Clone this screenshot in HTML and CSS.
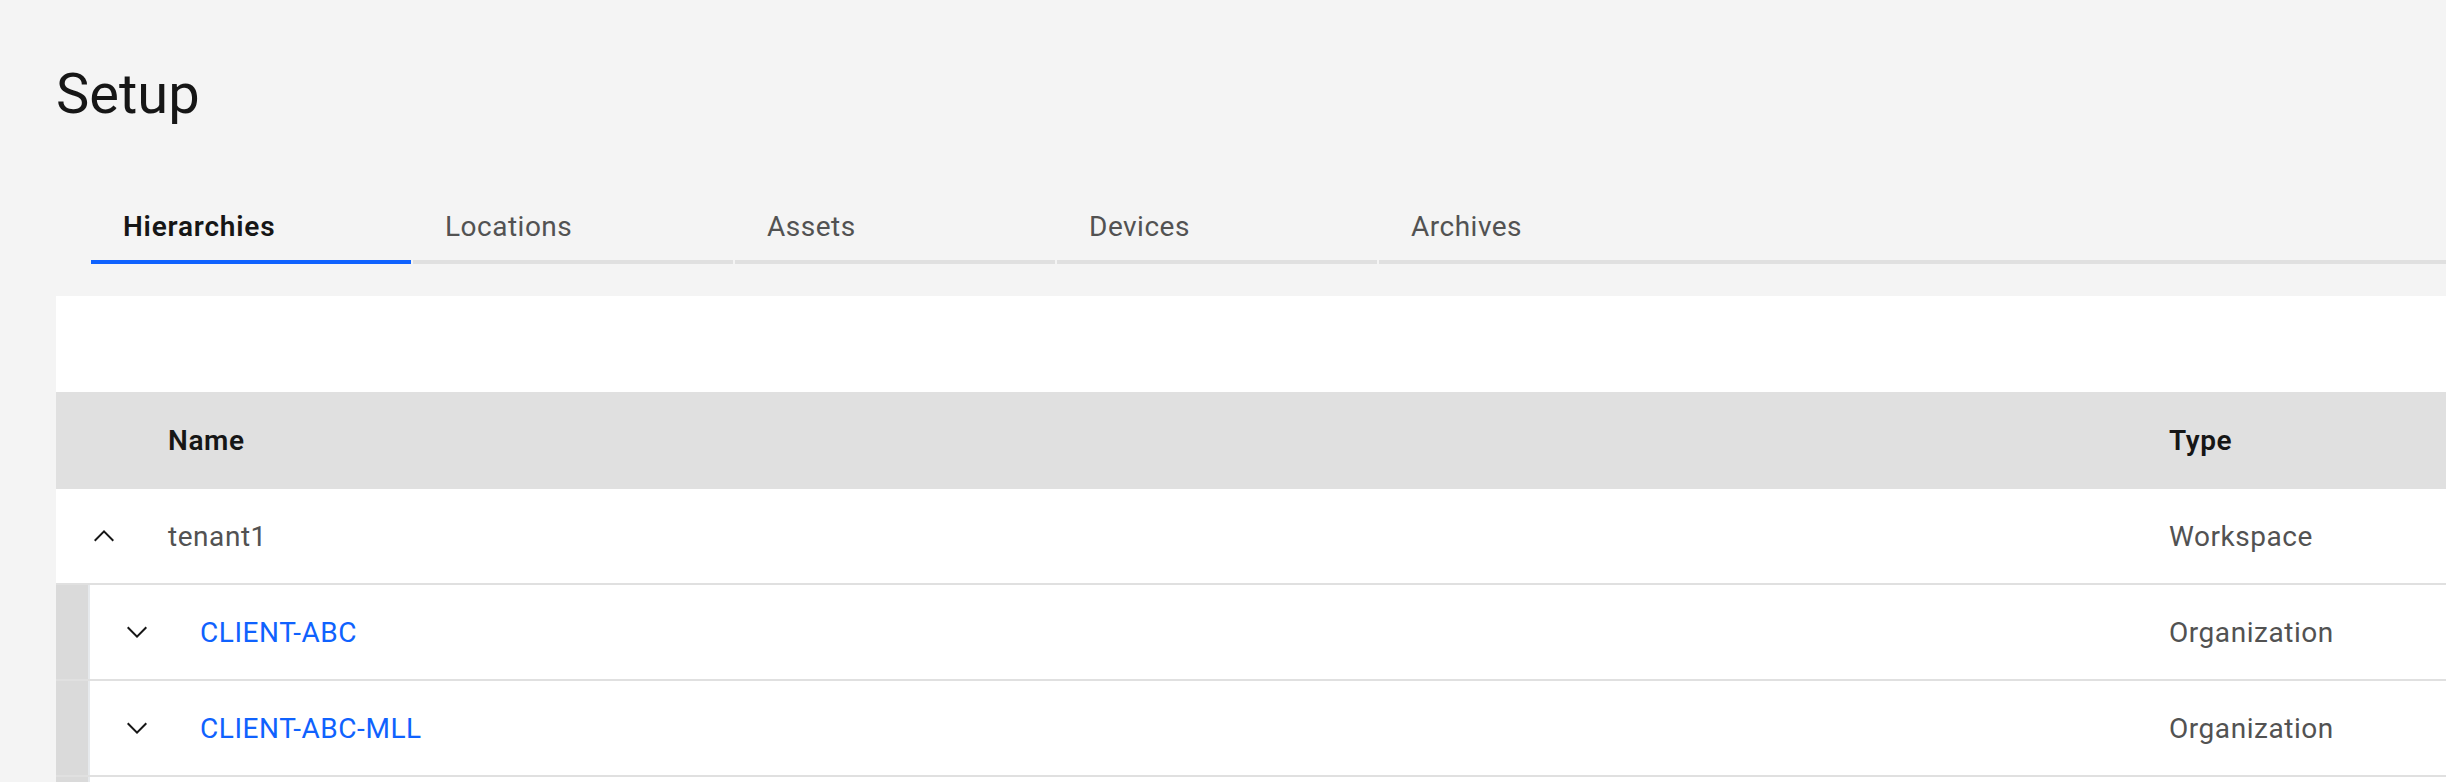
FILE: index.html
```html
<!DOCTYPE html>
<html lang="en">
<head>
<meta charset="utf-8">
<title>Setup</title>
<link rel="stylesheet" href="styles.css">
</head>
<body>
<main class="page">
  <h1 class="title">Setup</h1>
  <nav class="tabs">
    <div class="tab tab--active">Hierarchies</div>
    <div class="tab">Locations</div>
    <div class="tab">Assets</div>
    <div class="tab">Devices</div>
    <div class="tab tab--fill">Archives</div>
  </nav>
  <section class="panel">
    <div class="toolbar"></div>
    <div class="row row--header">
      <div class="cell"></div>
      <div class="cell cell--head">Name</div>
      <div class="cell cell--head">Type</div>
    </div>
    <div class="row">
      <div class="cell cell--expand">
        <svg class="chev" viewBox="0 0 32 32" width="32" height="32"><path d="M16 10L26 20 24.59 21.41 16 12.83 7.41 21.41 6 20 16 10z"/></svg>
      </div>
      <div class="cell cell--text">tenant1</div>
      <div class="cell cell--text">Workspace</div>
    </div>
    <div class="row row--child">
      <div class="indent"></div>
      <div class="cell cell--expand">
        <svg class="chev" viewBox="0 0 32 32" width="32" height="32"><path d="M16 22L6 12 7.41 10.59 16 19.17 24.59 10.59 26 12 16 22z"/></svg>
      </div>
      <div class="cell"><a class="link" href="#">CLIENT-ABC</a></div>
      <div class="cell cell--text">Organization</div>
    </div>
    <div class="row row--child">
      <div class="indent"></div>
      <div class="cell cell--expand">
        <svg class="chev" viewBox="0 0 32 32" width="32" height="32"><path d="M16 22L6 12 7.41 10.59 16 19.17 24.59 10.59 26 12 16 22z"/></svg>
      </div>
      <div class="cell"><a class="link" href="#">CLIENT-ABC-MLL</a></div>
      <div class="cell cell--text">Organization</div>
    </div>
    <div class="row row--child">
      <div class="indent"></div>
      <div class="cell cell--expand"></div>
      <div class="cell"></div>
      <div class="cell"></div>
    </div>
  </section>
</main>
</body>
</html>
```

FILE: styles.css
```css
* {
  box-sizing: border-box;
}

html, body {
  margin: 0;
  padding: 0;
  background: #f4f4f4;
}

body {
  font-family: Roboto, "Liberation Sans", Arial, sans-serif;
  color: #161616;
  overflow: hidden;
}

.page {
  padding: 61px 0 0 56px;
}

.title {
  margin: 0;
  font-size: 56px;
  font-weight: 400;
  line-height: 67px;
  color: #161616;
}

.tabs {
  display: flex;
  gap: 2px;
  margin: 56px 0 0 35px;
}

.tab {
  width: 320px;
  height: 80px;
  padding: 25px 32px 15px;
  font-size: 28px;
  line-height: 36px;
  letter-spacing: 0.5px;
  color: #525252;
  border-bottom: 4px solid #e0e0e0;
  white-space: nowrap;
}

.tab--active {
  color: #161616;
  font-weight: 600;
  letter-spacing: 0.8px;
  border-bottom-color: #0f62fe;
}

.tab--fill {
  flex: 1;
}

.panel {
  margin-top: 32px;
  background: #ffffff;
}

.toolbar {
  height: 96px;
}

.row {
  display: grid;
  grid-template-columns: 96px 1fr 293px;
  height: 96px;
  border-bottom: 2px solid #e0e0e0;
  font-size: 28px;
  letter-spacing: 0.55px;
}

.row--header {
  height: 97px;
  background: #e0e0e0;
  border-bottom: 0;
}

.row--child {
  grid-template-columns: 34px 94px 1fr 293px;
}

.cell {
  display: flex;
  align-items: center;
  padding-left: 16px;
  min-width: 0;
}

.cell--head {
  font-weight: 600;
  color: #161616;
  letter-spacing: 0.6px;
}

.cell--text {
  color: #525252;
}

.cell--expand {
  justify-content: center;
  padding-left: 0;
}

.indent {
  background: #dadada;
  border-right: 2px solid #e6e9ec;
}

.chev {
  fill: #161616;
  display: block;
}

.link {
  color: #0f62fe;
  text-decoration: none;
}
```
